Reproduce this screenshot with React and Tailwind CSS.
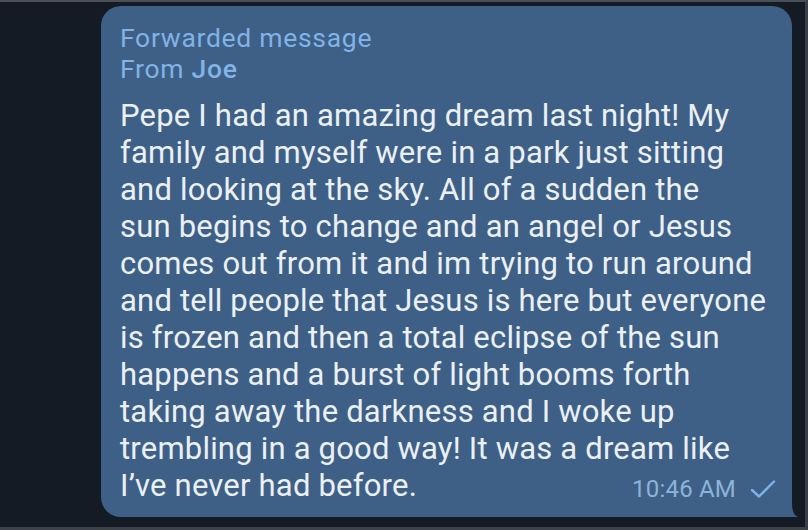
import React from 'react';

const lines = [
  'Pepe I had an amazing dream last night! My',
  'family and myself were in a park just sitting',
  'and looking at the sky. All of a sudden the',
  'sun begins to change and an angel or Jesus',
  'comes out from it and im trying to run around',
  'and tell people that Jesus is here but everyone',
  'is frozen and then a total eclipse of the sun',
  'happens and a burst of light booms forth',
  'taking away the darkness and I woke up',
  'trembling in a good way! It was a dream like',
];

const App = () => {
  return (
    <div className="w-[808px] h-[530px] bg-[#141b25] border-t-2 border-r-[3px] border-b-[3px] border-t-[#4a4f55] border-r-[#3a3f45] border-b-[#3d4247] overflow-hidden" style={{ fontFamily: 'Roboto, "Liberation Sans", sans-serif' }}>
      <div className="flex pl-[101px] pt-[4px]">
        <div className="relative w-[691px] h-[511px] bg-[#3f6086] rounded-[20px] rounded-br-none pl-[19px] pr-[14px] pt-[16px]">
          <div className="text-[#80b3e6] text-[26.5px] leading-[31px] tracking-[0.7px]">
            <p>Forwarded message</p>
            <p>From <span className="font-medium">Joe</span></p>
          </div>
          <div className="mt-[13px] text-[#eaf0f5] text-[31px] leading-[37px] tracking-[0.2px]">
            {lines.map((l) => (
              <p key={l} className="whitespace-nowrap">{l}</p>
            ))}
            <div className="flex items-end justify-between">
              <p className="whitespace-nowrap">I’ve never had before.</p>
              <div className="flex items-center gap-[14px] pb-[1px] pr-[2px] text-[#8db3d8] text-[24px] leading-[28px]">
                <span>10:46 AM</span>
                <svg width="26" height="18" viewBox="0 0 26 18" fill="none">
                  <path d="M2 10 L9 16.5 L24 1.5" stroke="#7fb2e6" strokeWidth="2.4" strokeLinecap="round" strokeLinejoin="round" />
                </svg>
              </div>
            </div>
          </div>
          <svg className="absolute right-[-6px] bottom-0" width="6" height="14" viewBox="0 0 6 14">
            <path d="M0 0 Q0 12 6 14 L0 14 Z" fill="#3f6086" />
          </svg>
        </div>
      </div>
    </div>
  );
};

export default App;
